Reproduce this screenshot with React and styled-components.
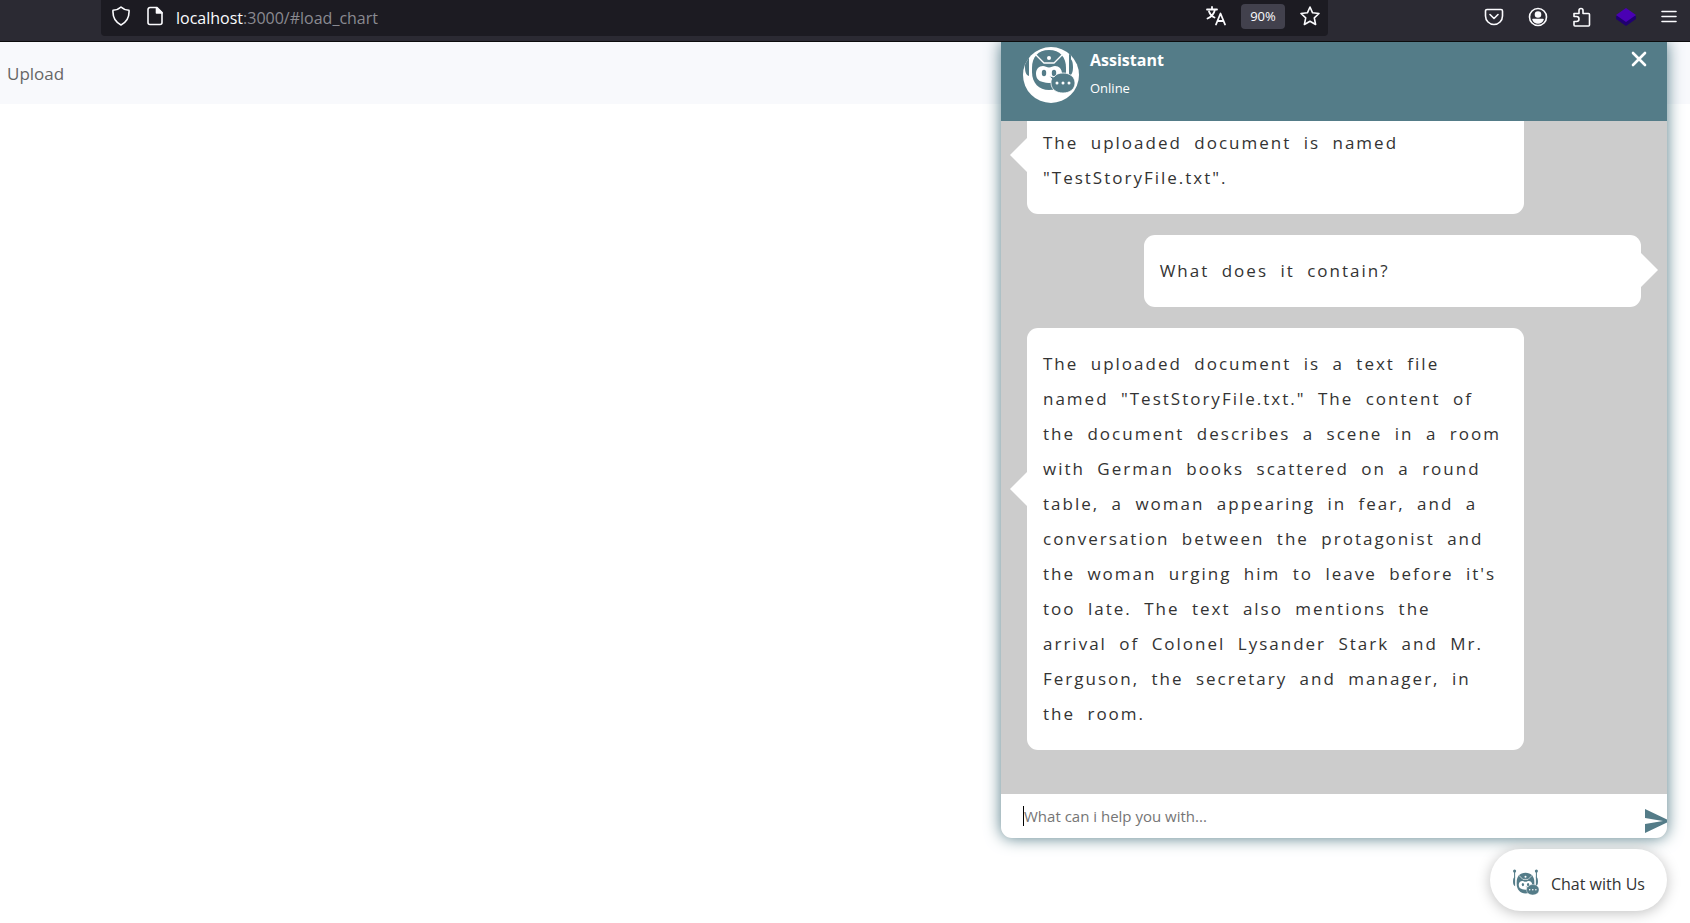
import React from 'react';
import styled, { createGlobalStyle } from 'styled-components';

const TEAL = '#547c88';

const GlobalStyle = createGlobalStyle`
  *, *::before, *::after { box-sizing: border-box; }
  body {
    margin: 0;
    background: #fff;
    font-family: 'Open Sans', 'Noto Sans', sans-serif;
    color: #333;
  }
  button, input { font-family: inherit; }
`;

const Page = styled.div`
  min-height: 100vh;
  display: flex;
  flex-direction: column;
`;

const BrowserBar = styled.header`
  height: 42px;
  padding: 0 0 5px 101px;
  display: flex;
  align-items: stretch;
  background: #2b2a33;
  border-bottom: 1px solid #0c0c0d;
  color: #fbfbfe;
`;

const AddressBar = styled.div`
  flex: 1;
  display: flex;
  align-items: center;
  padding: 0 1px 4px 10px;
  background: #1c1b22;
  border-radius: 0 0 4px 4px;
`;

const Address = styled.div`
  flex: 1;
  padding-top: 4px;
  font-size: 16px;
  line-height: 22px;
  color: #8a8a91;
  strong { font-weight: 400; color: #fbfbfe; }
`;

const IconButton = styled.button`
  display: flex;
  align-items: center;
  justify-content: center;
  width: ${(p) => p.$width || 34}px;
  padding: 0;
  border: 0;
  background: none;
  color: inherit;
  svg { flex: none; }
`;

const PageInfoButton = styled(IconButton)`
  width: 45px;
  padding-right: 11px;
  justify-content: flex-end;
`;

const Zoom = styled.button`
  width: 44px;
  height: 25px;
  margin: 0 8px;
  padding: 0;
  border: 0;
  border-radius: 4px;
  background: #42414d;
  color: #fbfbfe;
  font-size: 13px;
`;

const Tools = styled.div`
  display: flex;
  align-items: center;
  padding-bottom: 3px;
  margin-left: 144px;
`;

const Viewport = styled.main`
  flex: 1;
  position: relative;
  overflow: hidden;
`;

const NavBar = styled.nav`
  height: 62px;
  padding: 2px 7px 0;
  display: flex;
  align-items: center;
  background: #f8f9fc;
  a {
    font-size: 17px;
    line-height: 24px;
    color: #666;
    text-decoration: none;
  }
`;

const ChatPanel = styled.section`
  position: absolute;
  top: 0;
  right: 23px;
  bottom: 85px;
  width: 666px;
  max-width: calc(100% - 46px);
  display: flex;
  flex-direction: column;
  border-radius: 0 0 11px 11px;
  background: #ccc;
  box-shadow: 0 0 16px ${TEAL};
`;

const ChatHeader = styled.div`
  height: 79px;
  flex: none;
  display: flex;
  align-items: flex-start;
  gap: 11px;
  padding: 5px 20px 0 22px;
  background: ${TEAL};
  color: #fff;
`;

const Avatar = styled.div`
  width: 56px;
  height: 56px;
  border-radius: 50%;
  overflow: hidden;
  background: #fff;
  svg { display: block; }
`;

const Identity = styled.div`
  flex: 1;
  h2 {
    margin: 1px 0 6px;
    font-size: 16px;
    line-height: 24px;
    font-weight: 700;
  }
  p {
    margin: 0;
    font-size: 13px;
    line-height: 20px;
  }
`;

const Messages = styled.div`
  flex: 1;
  min-height: 0;
  overflow: hidden;
  display: flex;
  flex-direction: column;
  justify-content: flex-end;
  gap: 21px;
  padding: 0 26px 44px;
`;

const Bubble = styled.p`
  position: relative;
  flex: none;
  align-self: ${(p) => (p.$mine ? 'flex-end' : 'flex-start')};
  width: 81%;
  margin: 0;
  padding: 18px 20px 19px 16px;
  border-radius: 11px;
  background: #fff;
  font-size: 17px;
  line-height: 35px;
  letter-spacing: 2px;
  word-spacing: 6px;
  &::after {
    content: '';
    position: absolute;
    top: calc(36% - 8px);
    ${(p) => (p.$mine ? 'right' : 'left')}: -17px;
    border: 17px solid transparent;
    ${(p) => (p.$mine ? 'border-right-width: 0; border-left-color' : 'border-left-width: 0; border-right-color')}: #fff;
  }
`;

const Composer = styled.form`
  height: 44px;
  flex: none;
  display: flex;
  align-items: center;
  padding-left: 22px;
  overflow: hidden;
  border-radius: 0 0 11px 11px;
  background: #fff;
`;

const Caret = styled.span`
  width: 1px;
  height: 20px;
  background: #000;
`;

const MessageInput = styled.input`
  flex: 1;
  min-width: 0;
  padding: 0;
  border: 0;
  outline: 0;
  background: none;
  font-size: 15px;
  line-height: 22px;
  &::placeholder { color: #757575; opacity: 1; }
`;

const SendButton = styled(IconButton)`
  padding-top: 10px;
  color: ${TEAL};
`;

const ChatToggle = styled.button`
  position: absolute;
  right: 23px;
  bottom: 12px;
  height: 62px;
  display: flex;
  align-items: center;
  gap: 12px;
  padding: 4px 22px 0;
  border: 0;
  border-radius: 31px;
  background: #fff;
  box-shadow: 0 2px 14px rgba(0, 0, 0, 0.25);
  color: #333;
  font-size: 16px;
  span { padding-top: 4px; }
`;

function Robot({ size, viewBox }) {
  return (
    <svg width={size} height={size} viewBox={viewBox} aria-hidden="true">
      <g fill={TEAL}>
        <circle cx="5" cy="0" r="3" />
        <circle cx="47" cy="0" r="3" />
        <path d="M4 1h2v12H4zM46 1h2v12h-2z" />
        <path d="M6 11v18c-3-1-4-4-4-9s1-8 4-9zM46 11v18c3-1 4-4 4-9s-1-8-4-9z" />
        <path d="M26 3C15 3 9 10 9 21v4c0 11 7 18 17 18s17-7 17-18v-4C43 10 37 3 26 3z" />
      </g>
      <path d="M13 8l8 8h10l8-8" fill="none" stroke="#fff" strokeWidth="1.300" />
      <circle cx="26" cy="11" r="2" fill="#fff" />
      <path d="M20 19c2 0 4 1.500 6 1.500S30 19 32 19c4 0 7 3 7 7.500S37 34 32 35c-2 .6-4 1-6 1s-4-.4-6-1c-5-1-7-4-7-8.500S16 19 20 19z" fill="#fff" />
      <ellipse cx="21" cy="26" rx="2.200" ry="3.200" fill={TEAL} />
      <ellipse cx="31" cy="26" rx="2.200" ry="3.200" fill={TEAL} />
      <path d="M26 29l5 1c2-3 5-4 9-4 7 0 12 4 12 10s-5 10-12 10-12-4-12-10c0-2 0-3 1-4z" fill={TEAL} stroke="#fff" strokeWidth="0.8" />
      <g fill="#fff">
        <circle cx="34" cy="36" r="1.500" />
        <circle cx="40" cy="36" r="1.500" />
        <circle cx="46" cy="36" r="1.500" />
      </g>
    </svg>
  );
}

const Line = ({ children, size = 20, width = 1.6 }) => (
  <svg width={size} height={size} viewBox="0 0 20 20" fill="none" stroke="currentColor"
    strokeWidth={width} strokeLinecap="round" strokeLinejoin="round" aria-hidden="true">
    {children}
  </svg>
);

export default function App() {
  return (
    <Page>
      <GlobalStyle />
      <BrowserBar>
        <AddressBar>
          <IconButton $width={20} aria-label="Tracking protection">
            <Line><path d="M10 1c2 2 5 3 8 3.200C18.500 11 16 16 10 19C4 16 1.500 11 2 4.200C5 4 8 3 10 1z" /></Line>
          </IconButton>
          <PageInfoButton aria-label="Page information">
            <Line>
              <path d="M5 1.500h7l5 5v10a2 2 0 0 1-2 2H5a2 2 0 0 1-2-2v-13a2 2 0 0 1 2-2z" />
              <path d="M11.500 2v5H17z" fill="currentColor" />
            </Line>
          </PageInfoButton>
          <Address><strong>localhost</strong>:3000/#load_chart</Address>
          <IconButton aria-label="Translate">
            <Line width={1.8}>
              <path d="M1 3.500h10M6 1v2.500M9 3.500C8 8 5 11 1.500 12.500M3 5.500c1 3 3 5 5.500 6M10 18.500l4.500-11 4.500 11M11.500 15h6" />
            </Line>
          </IconButton>
          <Zoom>90%</Zoom>
          <IconButton aria-label="Bookmark">
            <Line><path d="M10 1l2.600 5.800 6.400.7-4.700 4.300 1.300 6.700-5.600-3.300-5.600 3.300 1.300-6.700L1 7.500l6.400-.7z" /></Line>
          </IconButton>
        </AddressBar>
        <Tools>
          <IconButton $width={44} aria-label="Save to Pocket">
            <Line><path d="M3 2.500h14a1.500 1.500 0 0 1 1.500 1.500v5a8.500 8.500 0 0 1-17 0V4A1.500 1.500 0 0 1 3 2.500z M6 7.500l4 4 4-4" /></Line>
          </IconButton>
          <IconButton $width={44} aria-label="Account">
            <Line>
              <circle cx="10" cy="10" r="8.500" />
              <circle cx="10" cy="7.500" r="2.500" fill="currentColor" />
              <path d="M5 12.500h10c-1 2.500-3 3.500-5 3.500s-4-1-5-3.500z" fill="currentColor" />
            </Line>
          </IconButton>
          <IconButton $width={44} aria-label="Extensions">
            <Line><path d="M2 9.500V6.500h5V3.500a2 2 0 0 1 4 0v3h5.500a1 1 0 0 1 1 1V18a1 1 0 0 1-1 1H3a1 1 0 0 1-1-1v-3.500h2.500a2 2 0 0 0 0-5z" /></Line>
          </IconButton>
          <IconButton $width={44} aria-label="Layers extension">
            <svg width="20" height="20" viewBox="0 0 20 20" aria-hidden="true">
              <path d="M0 9v3l10 7 10-7V9z" fill="#200070" />
              <path d="M10 1l10 7-10 7L0 8z" fill="#4a00b4" />
            </svg>
          </IconButton>
          <IconButton $width={42} aria-label="Menu">
            <Line><path d="M3 4.500h14M3 9.500h14M3 14.500h14" /></Line>
          </IconButton>
        </Tools>
      </BrowserBar>
      <Viewport>
        <NavBar><a href="#upload">Upload</a></NavBar>
        <ChatPanel aria-label="Assistant chat">
          <ChatHeader>
            <Avatar><Robot size={56} viewBox="0 0 56 56" /></Avatar>
            <Identity>
              <h2>Assistant</h2>
              <p>Online</p>
            </Identity>
            <IconButton $width={16} aria-label="Close chat">
              <Line size={24} width={2.2}><path d="M5 5l10 10M15 5L5 15" /></Line>
            </IconButton>
          </ChatHeader>
          <Messages>
            <Bubble>The uploaded document is named "TestStoryFile.txt".</Bubble>
            <Bubble $mine>What does it contain?</Bubble>
            <Bubble>
              The uploaded document is a text file named "TestStoryFile.txt." The content of the
              document describes a scene in a room with German books scattered on a round table, a
              woman appearing in fear, and a conversation between the protagonist and the woman
              urging him to leave before it's too late. The text also mentions the arrival of
              Colonel Lysander Stark and Mr. Ferguson, the secretary and manager, in the room.
            </Bubble>
          </Messages>
          <Composer onSubmit={(e) => e.preventDefault()}>
            <Caret />
            <MessageInput aria-label="Message" placeholder="What can i help you with..." />
            <SendButton $width={22} aria-label="Send">
              <svg width="24" height="24" viewBox="0 0 24 24" aria-hidden="true">
                <path d="M1 0l23 11v2L1 24v-9l18-3L1 9z" fill="currentColor" />
              </svg>
            </SendButton>
          </Composer>
        </ChatPanel>
        <ChatToggle><Robot size={27} viewBox="0 -4 52 52" /><span>Chat with Us</span></ChatToggle>
      </Viewport>
    </Page>
  );
}
